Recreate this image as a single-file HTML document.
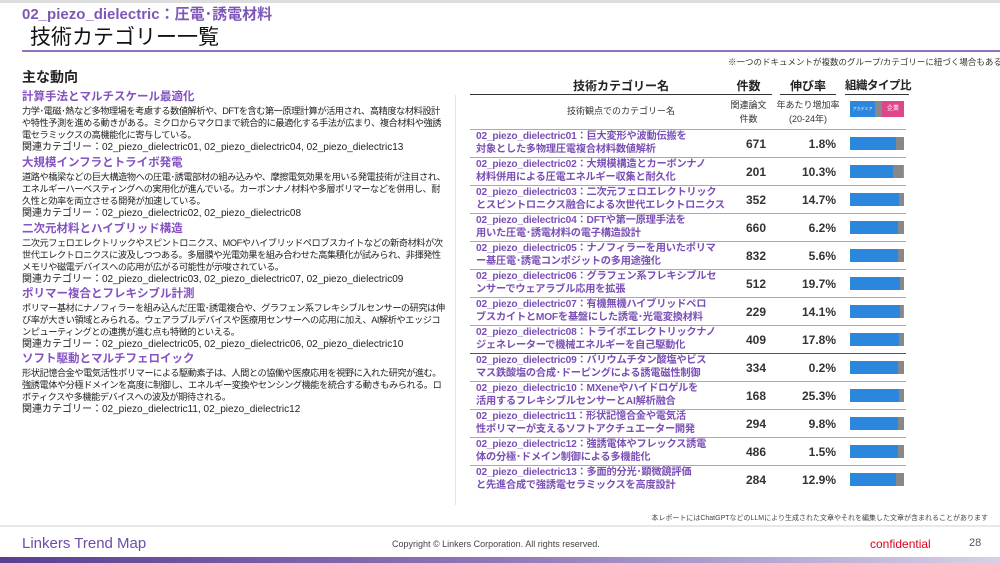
<!DOCTYPE html>
<html><head><meta charset="utf-8"><style>
*{margin:0;padding:0;box-sizing:border-box}
body{width:1000px;height:563px;background:#fff;position:relative;overflow:hidden;font-family:"Liberation Sans","Noto Sans CJK JP",sans-serif;color:#222}
.a{position:absolute;white-space:nowrap}
.h{color:#8552c2;font-size:11.5px;font-weight:bold;left:22px}
.p{font-size:9.2px;line-height:12px;left:22px;color:#222;white-space:normal;width:425px;letter-spacing:-0.45px}
.p span{font-size:10px;letter-spacing:0}
.row{position:absolute;left:470px;width:436px;height:28px;border-top:1px solid #aaa}
.row .n{position:absolute;left:6px;top:1px;font-size:10.2px;line-height:12.5px;color:#7b4fb5;font-weight:bold;letter-spacing:-0.2px;white-space:nowrap}
.row .c{position:absolute;left:255px;width:62px;text-align:center;top:7px;font-size:12px;font-weight:bold;color:#333}
.row .r{position:absolute;left:310px;width:56px;text-align:right;top:7px;font-size:12px;font-weight:bold;color:#333}
.row .b{position:absolute;left:380px;top:7px;width:54px;height:13px;background:#888}
.row .b i{position:absolute;left:0;top:0;bottom:0;background:#2b86de}
.row .b u{position:absolute;right:0;top:0;bottom:0;width:1px;background:#e66a9a}
</style></head><body>
<div class="a" style="left:0;top:0;width:1000px;height:3px;background:#ddd"></div>
<div class="a" style="left:22px;top:3px;font-size:15px;font-weight:bold;color:#7d57b8">02_piezo_dielectric：圧電･誘電材料</div>
<div class="a" style="left:30px;top:21px;font-size:21px;color:#111">技術カテゴリー一覧</div>
<div class="a" style="left:22px;top:50px;width:978px;height:2px;background:#9370c8"></div>
<div class="a" style="left:728px;top:56px;font-size:8.5px;color:#333">※一つのドキュメントが複数のグループ/カテゴリーに紐づく場合もある</div>

<div class="a" style="left:22px;top:67px;font-size:14px;font-weight:bold">主な動向</div>
<div class="a h" style="top:88px">計算手法とマルチスケール最適化</div>
<div class="a p" style="top:105px">力学･電磁･熱など多物理場を考慮する数値解析や、DFTを含む第一原理計算が活用され、高精度な材料設計や特性予測を進める動きがある。ミクロからマクロまで統合的に最適化する手法が広まり、複合材料や強誘電セラミックスの高機能化に寄与している。<br><span>関連カテゴリー：02_piezo_dielectric01, 02_piezo_dielectric04, 02_piezo_dielectric13</span></div>
<div class="a h" style="top:154px">大規模インフラとトライボ発電</div>
<div class="a p" style="top:171px">道路や橋梁などの巨大構造物への圧電･誘電部材の組み込みや、摩擦電気効果を用いる発電技術が注目され、エネルギーハーベスティングへの実用化が進んでいる。カーボンナノ材料や多層ポリマーなどを併用し、耐久性と効率を両立させる開発が加速している。<br><span>関連カテゴリー：02_piezo_dielectric02, 02_piezo_dielectric08</span></div>
<div class="a h" style="top:220px">二次元材料とハイブリッド構造</div>
<div class="a p" style="top:237px">二次元フェロエレクトリックやスピントロニクス、MOFやハイブリッドペロブスカイトなどの新奇材料が次世代エレクトロニクスに波及しつつある。多層膜や光電効果を組み合わせた高集積化が試みられ、非揮発性メモリや磁電デバイスへの応用が広がる可能性が示唆されている。<br><span>関連カテゴリー：02_piezo_dielectric03, 02_piezo_dielectric07, 02_piezo_dielectric09</span></div>
<div class="a h" style="top:285px">ポリマー複合とフレキシブル計測</div>
<div class="a p" style="top:302px">ポリマー基材にナノフィラーを組み込んだ圧電･誘電複合や、グラフェン系フレキシブルセンサーの研究は伸び率が大きい領域とみられる。ウェアラブルデバイスや医療用センサーへの応用に加え、AI解析やエッジコンピューティングとの連携が進む点も特徴的といえる。<br><span>関連カテゴリー：02_piezo_dielectric05, 02_piezo_dielectric06, 02_piezo_dielectric10</span></div>
<div class="a h" style="top:350px">ソフト駆動とマルチフェロイック</div>
<div class="a p" style="top:367px">形状記憶合金や電気活性ポリマーによる駆動素子は、人間との協働や医療応用を視野に入れた研究が進む。強誘電体や分極ドメインを高度に制御し、エネルギー変換やセンシング機能を統合する動きもみられる。ロボティクスや多機能デバイスへの波及が期待される。<br><span>関連カテゴリー：02_piezo_dielectric11, 02_piezo_dielectric12</span></div>

<div class="a" style="left:455px;top:95px;width:1px;height:410px;background:#e4e4e4"></div>

<div class="a" style="left:470px;top:77px;width:302px;text-align:center;font-size:12px;font-weight:bold">技術カテゴリー名</div>
<div class="a" style="left:470px;top:94px;width:302px;height:1px;background:#333"></div>
<div class="a" style="left:725px;top:77px;width:47px;text-align:center;font-size:12px;font-weight:bold">件数</div>
<div class="a" style="left:725px;top:94px;width:47px;height:1px;background:#333"></div>
<div class="a" style="left:780px;top:77px;width:56px;text-align:center;font-size:12px;font-weight:bold">伸び率</div>
<div class="a" style="left:780px;top:94px;width:56px;height:1px;background:#333"></div>
<div class="a" style="left:845px;top:77px;width:64px;text-align:center;font-size:11.5px;font-weight:bold;letter-spacing:-0.5px">組織タイプ比</div>
<div class="a" style="left:845px;top:94px;width:64px;height:1px;background:#333"></div>
<div class="a" style="left:470px;top:104px;width:302px;text-align:center;font-size:9px;color:#333">技術観点でのカテゴリー名</div>
<div class="a" style="left:725px;top:98px;width:47px;text-align:center;font-size:9px;line-height:14px;color:#333">関連論文<br>件数</div>
<div class="a" style="left:776px;top:98px;width:64px;text-align:center;font-size:9px;line-height:14px;color:#333">年あたり増加率<br>(20-24年)</div>
<div class="a" style="left:850px;top:101px;width:54px;height:16px;background:#e8e8e8">
<div style="position:absolute;left:0;top:0;width:25px;height:16px;background:#2b86de;color:#fff;font-size:4px;line-height:16px;text-align:center">アカデミア</div>
<div style="position:absolute;left:25px;top:0;width:7px;height:16px;background:#888"></div>
<div style="position:absolute;left:32px;top:0;width:22px;height:16px;background:#e0458a;color:#fff;font-size:6px;line-height:16px;text-align:center">企業</div></div>

<div class="row" style="top:129px"><div class="n">02_piezo_dielectric01：巨大変形や波動伝搬を<br>対象とした多物理圧電複合材料数値解析</div><div class="c">671</div><div class="r">1.8%</div><div class="b"><i style="width:86%"></i></div></div>
<div class="row" style="top:157px"><div class="n">02_piezo_dielectric02：大規模構造とカーボンナノ<br>材料併用による圧電エネルギー収集と耐久化</div><div class="c">201</div><div class="r">10.3%</div><div class="b"><i style="width:80%"></i><u></u></div></div>
<div class="row" style="top:185px"><div class="n">02_piezo_dielectric03：二次元フェロエレクトリック<br>とスピントロニクス融合による次世代エレクトロニクス</div><div class="c">352</div><div class="r">14.7%</div><div class="b"><i style="width:90%"></i></div></div>
<div class="row" style="top:213px"><div class="n">02_piezo_dielectric04：DFTや第一原理手法を<br>用いた圧電･誘電材料の電子構造設計</div><div class="c">660</div><div class="r">6.2%</div><div class="b"><i style="width:89%"></i></div></div>
<div class="row" style="top:241px"><div class="n">02_piezo_dielectric05：ナノフィラーを用いたポリマ<br>ー基圧電･誘電コンポジットの多用途強化</div><div class="c">832</div><div class="r">5.6%</div><div class="b"><i style="width:88%"></i></div></div>
<div class="row" style="top:269px"><div class="n">02_piezo_dielectric06：グラフェン系フレキシブルセ<br>ンサーでウェアラブル応用を拡張</div><div class="c">512</div><div class="r">19.7%</div><div class="b"><i style="width:92%"></i></div></div>
<div class="row" style="top:297px"><div class="n">02_piezo_dielectric07：有機無機ハイブリッドペロ<br>ブスカイトとMOFを基盤にした誘電･光電変換材料</div><div class="c">229</div><div class="r">14.1%</div><div class="b"><i style="width:92%"></i><u></u></div></div>
<div class="row" style="top:325px"><div class="n">02_piezo_dielectric08：トライボエレクトリックナノ<br>ジェネレーターで機械エネルギーを自己駆動化</div><div class="c">409</div><div class="r">17.8%</div><div class="b"><i style="width:91%"></i></div></div>
<div class="row" style="top:353px;border-top-color:#555"><div class="n">02_piezo_dielectric09：バリウムチタン酸塩やビス<br>マス鉄酸塩の合成･ドーピングによる誘電磁性制御</div><div class="c">334</div><div class="r">0.2%</div><div class="b"><i style="width:88%"></i></div></div>
<div class="row" style="top:381px"><div class="n">02_piezo_dielectric10：MXeneやハイドロゲルを<br>活用するフレキシブルセンサーとAI解析融合</div><div class="c">168</div><div class="r">25.3%</div><div class="b"><i style="width:91%"></i></div></div>
<div class="row" style="top:409px"><div class="n">02_piezo_dielectric11：形状記憶合金や電気活<br>性ポリマーが支えるソフトアクチュエーター開発</div><div class="c">294</div><div class="r">9.8%</div><div class="b"><i style="width:89%"></i></div></div>
<div class="row" style="top:437px"><div class="n">02_piezo_dielectric12：強誘電体やフレックス誘電<br>体の分極･ドメイン制御による多機能化</div><div class="c">486</div><div class="r">1.5%</div><div class="b"><i style="width:89%"></i></div></div>
<div class="row" style="top:465px"><div class="n">02_piezo_dielectric13：多面的分光･顕微鏡評価<br>と先進合成で強誘電セラミックスを高度設計</div><div class="c">284</div><div class="r">12.9%</div><div class="b"><i style="width:85%"></i></div></div>

<div class="a" style="right:12px;top:513px;font-size:7px;color:#444">本レポートにはChatGPTなどのLLMにより生成された文章やそれを編集した文章が含まれることがあります</div>
<div class="a" style="left:0;top:525px;width:1000px;height:2px;background:#e8e8e8"></div>
<div class="a" style="left:22px;top:535px;font-size:15px;color:#6a4ea8">Linkers Trend Map</div>
<div class="a" style="left:392px;top:539px;font-size:9px;color:#444">Copyright © Linkers Corporation. All rights reserved.</div>
<div class="a" style="left:870px;top:537px;font-size:12px;color:#e0001a">confidential</div>
<div class="a" style="left:969px;top:537px;font-size:11px;color:#555">28</div>
<div class="a" style="left:0;top:557px;width:1000px;height:6px;background:linear-gradient(90deg,#5a3f90,#8f78b8 50%,#d8d0e6)"></div>
</body></html>
